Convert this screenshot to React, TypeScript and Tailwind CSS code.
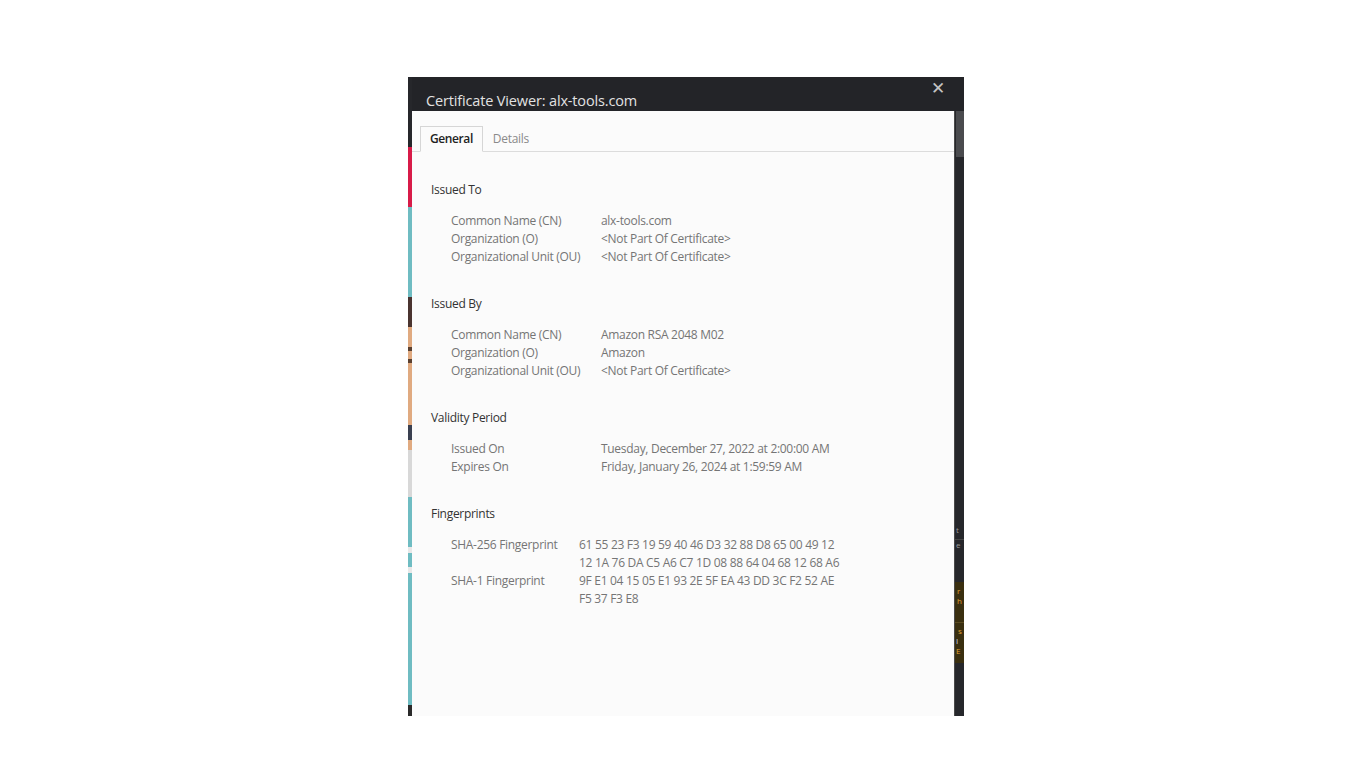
import React from "react";

type Row = { label: string; value: string[] };
type Section = { title: string; valueCol: string; rows: Row[] };

const sections: Section[] = [
  {
    title: "Issued To",
    valueCol: "w-[150px]",
    rows: [
      { label: "Common Name (CN)", value: ["alx-tools.com"] },
      { label: "Organization (O)", value: ["<Not Part Of Certificate>"] },
      { label: "Organizational Unit (OU)", value: ["<Not Part Of Certificate>"] },
    ],
  },
  {
    title: "Issued By",
    valueCol: "w-[150px]",
    rows: [
      { label: "Common Name (CN)", value: ["Amazon RSA 2048 M02"] },
      { label: "Organization (O)", value: ["Amazon"] },
      { label: "Organizational Unit (OU)", value: ["<Not Part Of Certificate>"] },
    ],
  },
  {
    title: "Validity Period",
    valueCol: "w-[150px]",
    rows: [
      { label: "Issued On", value: ["Tuesday, December 27, 2022 at 2:00:00 AM"] },
      { label: "Expires On", value: ["Friday, January 26, 2024 at 1:59:59 AM"] },
    ],
  },
  {
    title: "Fingerprints",
    valueCol: "w-[128px]",
    rows: [
      {
        label: "SHA-256 Fingerprint",
        value: [
          "61 55 23 F3 19 59 40 46 D3 32 88 D8 65 00 49 12",
          "12 1A 76 DA C5 A6 C7 1D 08 88 64 04 68 12 68 A6",
        ],
      },
      {
        label: "SHA-1 Fingerprint",
        value: ["9F E1 04 15 05 E1 93 2E 5F EA 43 DD 3C F2 52 AE", "F5 37 F3 E8"],
      },
    ],
  },
];

// colored strip from the page behind the dialog (left edge)
const leftStrip = [
  "h-[70px] bg-[#26272b]",
  "h-[60px] bg-[#d81b48]",
  "h-[90px] bg-[#6fbcc2]",
  "h-[30px] bg-[#4a3430]",
  "h-[20px] bg-[#e0aa80]",
  "h-[4px] bg-[#5a4030]",
  "h-[8px] bg-[#e0aa80]",
  "h-[4px] bg-[#5a4030]",
  "h-[62px] bg-[#e0aa80]",
  "h-[15px] bg-[#3a4050]",
  "h-[10px] bg-[#e0aa80]",
  "h-[47px] bg-[#d8d8d8]",
  "h-[50px] bg-[#6fbcc2]",
  "h-[6px] bg-[#e8e8e8]",
  "h-[14px] bg-[#6fbcc2]",
  "h-[6px] bg-[#e8e8e8]",
  "h-[132px] bg-[#6fbcc2]",
  "flex-1 bg-[#2a2a2a]",
];

export default function App() {
  return (
    <div
      className="min-h-screen bg-white pt-[77px] pl-[408px]"
      style={{ fontFamily: '"Open Sans", "Noto Sans", sans-serif' }}
    >
      <div className="flex w-[556px] h-[639px] bg-[#232428]">
        {/* left strip */}
        <div className="flex flex-col w-[4px] shrink-0">
          {leftStrip.map((c, i) => (
            <div key={i} className={c} />
          ))}
        </div>

        <div className="flex flex-col flex-1 min-w-0">
          {/* Title bar */}
          <div className="h-[34px] shrink-0 flex items-start relative">
            <span className="pl-[14px] pt-[15px] text-[14.5px] leading-[18px] text-[#e2e2e2] tracking-[-0.15px]">
              Certificate Viewer: alx-tools.com
            </span>
            <span className="absolute left-[519px] top-[1px] text-[#c4c4c4] text-[17px] leading-[20px]">
              ✕
            </span>
          </div>

          <div className="flex flex-1 min-h-0">
            {/* Panel */}
            <div className="w-[542px] bg-[#fbfbfb] pt-[15px] text-[12px] leading-[18px]">
              <div className="flex items-end border-b border-[#dcdcdc] pl-[8px] h-[26px]">
                <div className="h-[26px] -mb-px px-[9px] flex items-center border border-[#d6d6d6] border-b-[#fbfbfb] bg-[#fbfbfb] text-[#222] font-semibold tracking-[-0.4px]">
                  General
                </div>
                <div className="h-[25px] px-[10px] flex items-center text-[#8a8a8a] tracking-[-0.3px]">
                  Details
                </div>
              </div>

              <div className="pl-[19px] tracking-[-0.3px]">
                {sections.map((s) => (
                  <div key={s.title} className="mt-[29px]">
                    <div className="text-[#333]">{s.title}</div>
                    <div className="mt-[13px] pl-[20px] text-[#757575]">
                      {s.rows.map((r) => (
                        <div key={r.label} className="flex">
                          <div className={`${s.valueCol} shrink-0`}>{r.label}</div>
                          <div>
                            {r.value.map((v) => (
                              <div key={v} className="whitespace-nowrap">
                                {v}
                              </div>
                            ))}
                          </div>
                        </div>
                      ))}
                    </div>
                  </div>
                ))}
              </div>
            </div>

            {/* right strip: page behind */}
            <div className="flex flex-col w-[10px] bg-[#26272b] border-l border-[#4a4a4a] overflow-hidden text-[8px] leading-[10px]">
              <div className="h-[46px] bg-[#4a4b4e] ml-[1px]" />
              <div className="h-[368px]" />
              <div className="h-[14px] text-[#9a9a9a] pl-[1px]">t</div>
              <div className="h-[1px] bg-[#444]" />
              <div className="h-[14px] text-[#9a9a9a] pl-[1px]">e</div>
              <div className="h-[28px]" />
              <div className="h-[40px] bg-[#3a2f10] text-[#e0a030] pl-[2px] pt-[4px]">
                <div>r</div>
                <div>h</div>
              </div>
              <div className="h-[1px] bg-[#5a4a20]" />
              <div className="h-[40px] bg-[#3a2f10] text-[#e0a030] pl-[1px] pt-[3px]">
                <div className="pl-[2px]">s</div>
                <div className="text-[#c9d6e0]">I</div>
                <div>E</div>
              </div>
              <div className="flex-1" />
            </div>
          </div>
        </div>
      </div>
    </div>
  );
}
